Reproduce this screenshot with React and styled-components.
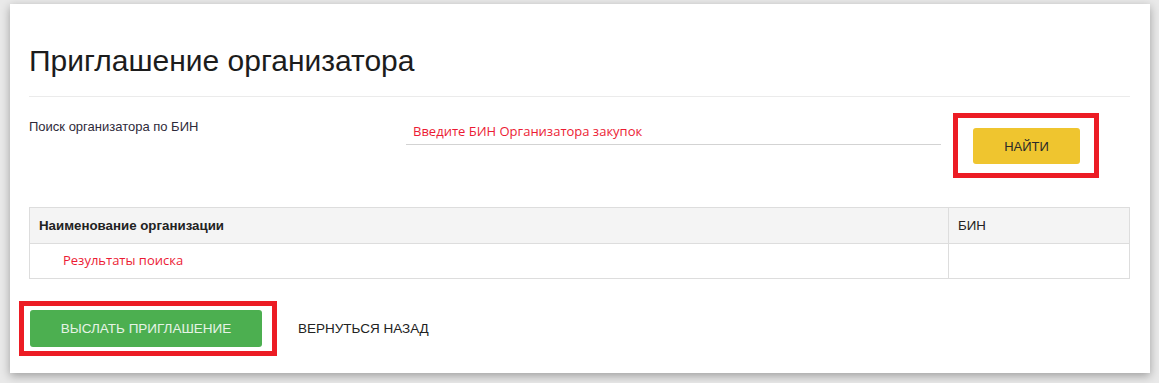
import React from "react";
import styled, { createGlobalStyle } from "styled-components";

const GlobalStyle = createGlobalStyle`
  html, body {
    margin: 0;
    padding: 0;
    background: #e9e9e9;
    font-family: "Liberation Sans", Arial, sans-serif;
  }
`;

const Page = styled.div`
  width: 1159px;
  height: 383px;
  padding: 4px 0 0 10px;
  box-sizing: border-box;
  overflow: hidden;
`;

const Card = styled.div`
  width: 1140px;
  height: 369px;
  box-sizing: border-box;
  background: #fff;
  box-shadow: 0 3px 9px rgba(0, 0, 0, 0.32);
  padding: 40px 20px 0 19px;
`;

const Title = styled.h1`
  margin: 0;
  font-size: 30px;
  line-height: 33px;
  font-weight: normal;
  color: #1c1c1c;
  padding-bottom: 19px;
  border-bottom: 1px solid #ebebeb;
`;

const SearchRow = styled.div`
  display: flex;
  align-items: flex-start;
  margin-top: 16px;
`;

const Label = styled.div`
  width: 377px;
  padding-top: 5px;
  font-size: 13px;
  line-height: 18px;
  color: #2e2a3a;
`;

const Input = styled.input`
  width: 535px;
  height: 27px;
  margin-top: 5px;
  margin-right: 12px;
  box-sizing: border-box;
  border: none;
  border-bottom: 1px solid #d3d3d3;
  outline: none;
  padding: 0 7px;
  font-family: "Open Sans", sans-serif;
  font-size: 13px;
  background: transparent;

  &::placeholder {
    color: #ec1b34;
    opacity: 1;
  }
`;

const Highlight = styled.div`
  display: inline-flex;
  border: 5px solid #ec1c24;
  padding: ${(p) => p.$pad};
  margin-left: ${(p) => p.$shift || 0};
`;

const Button = styled.button`
  border: none;
  border-radius: 3px;
  width: ${(p) => p.$w};
  height: ${(p) => p.$h};
  background: ${(p) => p.$bg};
  color: ${(p) => p.$fg};
  font-family: "Liberation Sans", Arial, sans-serif;
  font-size: ${(p) => p.$size || "13px"};
  text-transform: uppercase;
  cursor: pointer;
`;

const Table = styled.table`
  width: 1101px;
  margin-top: 29px;
  border-collapse: collapse;
  font-size: 13.3px;
`;

const Th = styled.th`
  height: 36px;
  box-sizing: border-box;
  background: #f4f4f4;
  border: 1px solid #dddddd;
  text-align: left;
  padding: 0 9px;
  color: #222;
  font-weight: ${(p) => (p.$bold ? "bold" : "normal")};
  width: ${(p) => p.$w || "auto"};
`;

const Td = styled.td`
  height: 35px;
  box-sizing: border-box;
  border: 1px solid #dddddd;
  padding: 0 0 2px ${(p) => p.$indent || "9px"};
`;

const ResultText = styled.span`
  font-family: "Open Sans", sans-serif;
  font-size: 13px;
  color: #ec1b34;
`;

const Actions = styled.div`
  display: flex;
  align-items: center;
  margin-top: 22px;
`;

const LinkButton = styled.button`
  border: none;
  background: none;
  margin-left: 21px;
  padding: 0;
  font-family: "Liberation Sans", Arial, sans-serif;
  font-size: 13.5px;
  color: #222;
  text-transform: uppercase;
  cursor: pointer;
`;

export default function App() {
  return (
    <>
      <GlobalStyle />
      <Page>
        <Card>
          <Title>Приглашение организатора</Title>

          <SearchRow>
            <Label>Поиск организатора по БИН</Label>
            <Input placeholder="Введите БИН Организатора закупок" />
            <Highlight $pad="10px 14px 9px 15px">
              <Button $w="107px" $h="36px" $bg="#efc52f" $fg="#2a2a2a">
                Найти
              </Button>
            </Highlight>
          </SearchRow>

          <Table>
            <thead>
              <tr>
                <Th $bold $w="919px">Наименование организации</Th>
                <Th>БИН</Th>
              </tr>
            </thead>
            <tbody>
              <tr>
                <Td $indent="33px">
                  <ResultText>Результаты поиска</ResultText>
                </Td>
                <Td />
              </tr>
            </tbody>
          </Table>

          <Actions>
            <Highlight $pad="4px 10px 4px 6px" $shift="-10px">
              <Button $w="232px" $h="37px" $bg="#4caf50" $fg="#e6f3e6" $size="13.5px">
                Выслать приглашение
              </Button>
            </Highlight>
            <LinkButton>Вернуться назад</LinkButton>
          </Actions>
        </Card>
      </Page>
    </>
  );
}
